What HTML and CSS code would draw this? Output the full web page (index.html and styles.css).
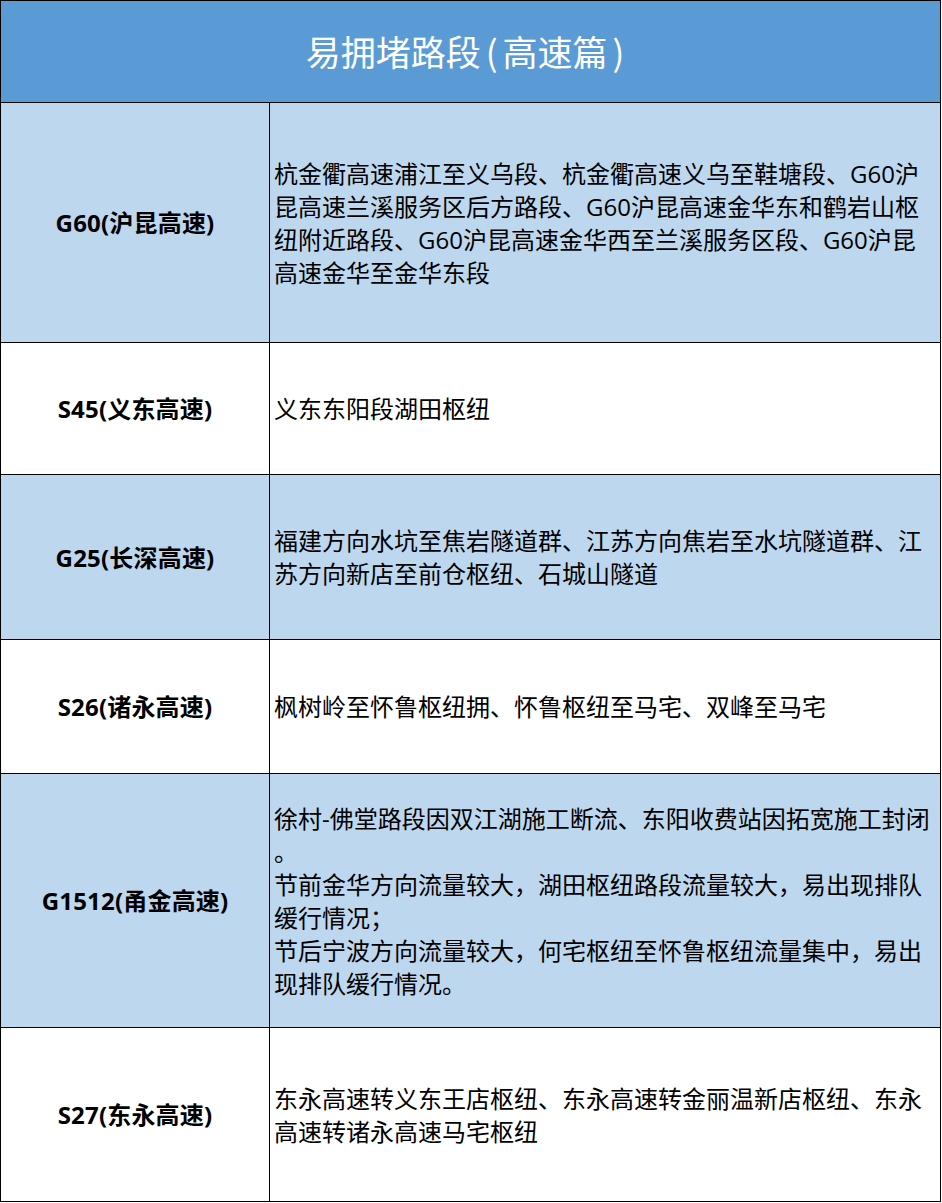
FILE: index.html
```html
<!DOCTYPE html>
<html lang="zh-CN">
<head>
<meta charset="utf-8">
<title>易拥堵路段(高速篇)</title>
<link rel="stylesheet" href="styles.css">
</head>
<body>
<div class="table">
  <div class="head">易拥堵路段<span class="paren">(</span>高速篇<span class="paren">)</span></div>

  <div class="cell name blue">G60(沪昆高速)</div>
  <div class="cell desc blue">杭金衢高速浦江至义乌段、杭金衢高速义乌至鞋塘段、G60沪<br>昆高速兰溪服务区后方路段、G60沪昆高速金华东和鹤岩山枢<br>纽附近路段、G60沪昆高速金华西至兰溪服务区段、G60沪昆<br>高速金华至金华东段</div>

  <div class="cell name">S45(义东高速)</div>
  <div class="cell desc">义东东阳段湖田枢纽</div>

  <div class="cell name blue">G25(长深高速)</div>
  <div class="cell desc blue">福建方向水坑至焦岩隧道群、江苏方向焦岩至水坑隧道群、江<br>苏方向新店至前仓枢纽、石城山隧道</div>

  <div class="cell name">S26(诸永高速)</div>
  <div class="cell desc">枫树岭至怀鲁枢纽拥、怀鲁枢纽至马宅、双峰至马宅</div>

  <div class="cell name blue">G1512(甬金高速)</div>
  <div class="cell desc blue">徐村-佛堂路段因双江湖施工断流、东阳收费站因拓宽施工封闭<br>。<br>节前金华方向流量较大，湖田枢纽路段流量较大，易出现排队<br>缓行情况；<br>节后宁波方向流量较大，何宅枢纽至怀鲁枢纽流量集中，易出<br>现排队缓行情况。</div>

  <div class="cell name">S27(东永高速)</div>
  <div class="cell desc">东永高速转义东王店枢纽、东永高速转金丽温新店枢纽、东永<br>高速转诸永高速马宅枢纽</div>
</div>
</body>
</html>
```

FILE: styles.css
```css
html, body {
  margin: 0;
  padding: 0;
  background: #ffffff;
}

.table {
  width: 941px;
  box-sizing: border-box;
  display: grid;
  grid-template-columns: 269px 671px;
  grid-template-rows: 102px 240px 132px 165px 134px 254px 174px;
  border-top: 1px solid #000;
  border-left: 1px solid #000;
  font-family: "Open Sans", "Noto Sans CJK SC", sans-serif;
  color: #000;
}

.head {
  grid-column: 1 / 3;
  box-sizing: border-box;
  background: #5b9bd5;
  border-right: 1px solid #000;
  border-bottom: 1px solid #000;
  color: #ffffff;
  font-family: "Noto Sans CJK SC", sans-serif;
  font-size: 35px;
  display: flex;
  align-items: center;
  justify-content: center;
  padding-right: 6px;
  padding-bottom: 2px;
}

.paren {
  margin: 0 5px;
}

.cell {
  box-sizing: border-box;
  border-right: 1px solid #000;
  border-bottom: 1px solid #000;
  display: flex;
  align-items: center;
}

.blue {
  background: #bdd7ee;
}

.name {
  justify-content: center;
  font-weight: 700;
  font-size: 24px;
  line-height: 33px;
  letter-spacing: 0.2px;
}

.desc {
  padding-left: 4px;
  font-size: 24px;
  line-height: 33px;
  white-space: nowrap;
}
```
